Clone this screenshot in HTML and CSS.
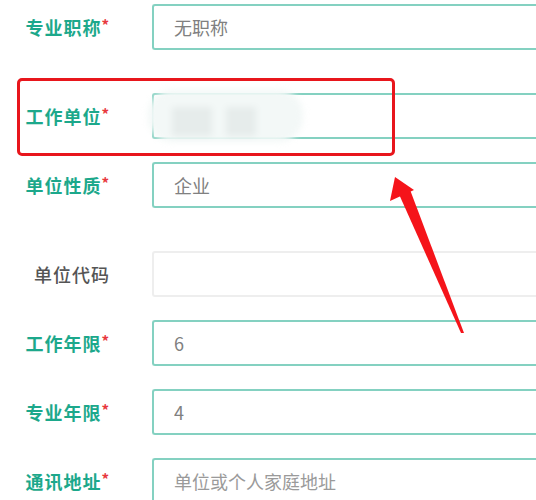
FILE: index.html
```html
<!DOCTYPE html>
<html lang="zh-CN">
<head>
    <meta charset="UTF-8">
    <meta name="viewport" content="width=device-width, initial-scale=1.0">
    <title>工作信息</title>
    <link rel="stylesheet" href="styles.css">
</head>
<body>
    <div class="form">
        <div class="row">
            <label class="label">专业职称<span class="star">*</span></label>
            <input class="field" type="text" value="无职称" readonly>
        </div>

        <div class="row spaced">
            <label class="label">工作单位<span class="star">*</span></label>
            <input class="field" type="text" value="" readonly>
            <!-- blurred out company name -->
            <div class="mask">
                <span class="block b1"></span>
                <span class="block b2"></span>
            </div>
        </div>

        <div class="row">
            <label class="label">单位性质<span class="star">*</span></label>
            <input class="field" type="text" value="企业" readonly>
        </div>

        <div class="row spaced">
            <label class="label plain">单位代码</label>
            <input class="field empty" type="text" value="" readonly>
        </div>

        <div class="row">
            <label class="label">工作年限<span class="star">*</span></label>
            <input class="field" type="text" value="6" readonly>
        </div>

        <div class="row">
            <label class="label">专业年限<span class="star">*</span></label>
            <input class="field" type="text" value="4" readonly>
        </div>

        <div class="row">
            <label class="label">通讯地址<span class="star">*</span></label>
            <input class="field" type="text" placeholder="单位或个人家庭地址">
        </div>
    </div>

    <!-- annotation on top of the screenshot -->
    <div class="highlight"></div>
    <svg class="arrow" width="536" height="500" viewBox="0 0 536 500">
        <polygon points="395,177 390,201 414,190" fill="#f5141a"/>
        <polygon points="398,192 409,187 464,333 461,333" fill="#f5141a"/>
    </svg>
</body>
</html>
```

FILE: styles.css
```css
html, body {
    margin: 0;
    overflow: hidden;
}
body {
    position: relative;
    width: 536px;
    height: 500px;
    background: #fff;
    font-family: "Noto Sans CJK SC", "Noto Sans", sans-serif;
}
.form {
    display: flex;
    flex-direction: column;
    gap: 23px;
    padding-top: 4px;
}
.row {
    position: relative;
    display: flex;
    align-items: center;
}
.row.spaced {
    margin-top: 20px;
}
.label {
    width: 110px;
    margin-right: 42px;
    flex-shrink: 0;
    text-align: right;
    font-size: 18px;
    font-weight: 700;
    letter-spacing: 1px;
    color: #1ca88b;
    white-space: nowrap;
}
.label.plain {
    color: #555;
    font-weight: 500;
}
.star {
    color: #e8383d;
    font-size: 15px;
    vertical-align: top;
    margin-left: 0;
}
/* the inputs run on past the right edge of the screen */
.field {
    box-sizing: border-box;
    flex: 1;
    min-width: 0;
    height: 46px;
    padding: 0 20px;
    border: 2px solid #84d1c1;
    border-right: none;
    border-radius: 3px 0 0 3px;
    background: #fff;
    font-family: inherit;
    font-size: 18px;
    color: #808080;
    outline: none;
}
.field.empty {
    border-color: #eeeeee;
}
.field::placeholder {
    color: #9a9a9a;
}
.mask {
    position: absolute;
    left: 148px;
    top: -3px;
    width: 155px;
    height: 52px;
    border-radius: 24px;
    background: #f3f8f7;
    filter: blur(3px);
}
.block {
    position: absolute;
    top: 17px;
    height: 29px;
    background: #e6eceb;
}
.b1 {
    left: 24px;
    width: 40px;
}
.b2 {
    left: 78px;
    width: 30px;
}
.highlight {
    position: absolute;
    left: 17px;
    top: 78px;
    width: 372px;
    height: 72px;
    border: 3px solid #e8161c;
    border-radius: 5px;
}
.arrow {
    position: absolute;
    left: 0;
    top: 0;
}
```
